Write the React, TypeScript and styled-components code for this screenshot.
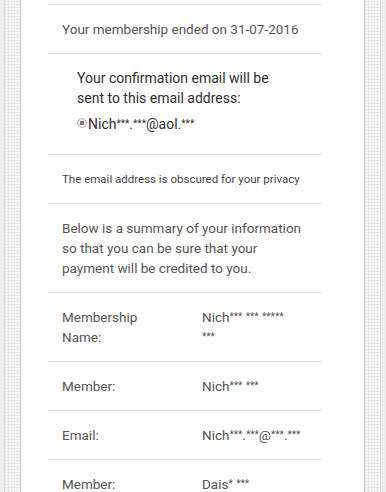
import React from "react";
import styled, { createGlobalStyle } from "styled-components";

const Global = createGlobalStyle`
  html, body { margin: 0; padding: 0; }
  body {
    background: #eeeeee;
    font-family: Roboto, Lato, "Liberation Sans", sans-serif;
    overflow: hidden;
  }
`;

const Page = styled.div`
  margin: 0 5px 0 4px;
  border-left: 1px solid #dcdcdc;
  border-right: 1px solid #dcdcdc;
  padding: 0 15px;
  min-height: 492px;
  background-color: #f8f8f8;
  background-image:
    repeating-linear-gradient(0deg, rgba(0,0,0,0.05) 0 1px, transparent 1px 3px),
    repeating-linear-gradient(90deg, rgba(0,0,0,0.05) 0 1px, transparent 1px 3px);
`;

const Card = styled.div`
  background: #fff;
  border-left: 1px solid #c9c9c9;
  border-right: 1px solid #c9c9c9;
  min-height: 492px;
  padding-top: 4px;
  box-sizing: border-box;
`;

const Inner = styled.div`
  margin-left: 27px;
  width: 274px;
  border-top: 1px solid #dddddd;
`;

const Section = styled.div`
  padding: 14px 14px;
  border-bottom: 1px solid #dddddd;
  line-height: 20px;
`;

const Text = styled.div<{ $size?: number; $color?: string }>`
  font-size: ${(p) => p.$size ?? 13.5}px;
  color: ${(p) => p.$color ?? "#555"};
`;

const Confirm = styled.div`
  padding: 0 15px;
  font-size: 14px;
  color: #2e2e2e;
  line-height: 20px;
`;

const RadioRow = styled.label`
  display: flex;
  align-items: center;
  height: 32px;
  gap: 1px;
`;

const Radio = styled.span`
  width: 8px;
  height: 8px;
  border-radius: 50%;
  border: 1px solid #b8b8b8;
  background: radial-gradient(circle, #777 0 2px, #e8e8e8 2.5px);
  margin-top: -2px;
`;

const Row = styled.div`
  display: grid;
  grid-template-columns: 140px 96px;
  padding: 14px 14px;
  border-bottom: 1px solid #dddddd;
  line-height: 20px;
  font-size: 13.5px;
  color: #555;
`;

const Label = styled.div`
  padding-right: 40px;
`;

const Value = styled.div`
  white-space: normal;
`;

const Stars = styled.span`
  font-size: 10px;
  line-height: 0;
  position: relative;
  top: -2px;
`;

function Masked({ text }: { text: string }) {
  const parts = text.split(/(\*+)/);
  return (
    <>
      {parts.map((p, i) =>
        p.startsWith("*") ? <Stars key={i}>{p}</Stars> : <React.Fragment key={i}>{p}</React.Fragment>
      )}
    </>
  );
}

export default function App() {
  const rows = [
    { label: "Membership Name:", value: "Nich*** *** ***** ***" },
    { label: "Member:", value: "Nich*** ***" },
    { label: "Email:", value: "Nich***.***@***.***" },
    { label: "Member:", value: "Dais* ***" },
  ];
  return (
    <>
      <Global />
      <Page>
        <Card>
          <Inner>
            <Section>
              <Text>Your membership ended on 31-07-2016</Text>
            </Section>
            <Section>
              <Confirm>
                <div>Your confirmation email will be sent to this email address:</div>
                <RadioRow>
                  <Radio />
                  <span>
                    <Masked text="Nich***.***@aol.***" />
                  </span>
                </RadioRow>
              </Confirm>
            </Section>
            <Section>
              <Text $size={11.5} $color="#444">
                The email address is obscured for your privacy
              </Text>
            </Section>
            <Section>
              <Text>
                Below is a summary of your information so that you can be sure that your
                payment will be credited to you.
              </Text>
            </Section>
            {rows.map((r, i) => (
              <Row key={i}>
                <Label>{r.label}</Label>
                <Value>
                  <Masked text={r.value} />
                </Value>
              </Row>
            ))}
          </Inner>
        </Card>
      </Page>
    </>
  );
}
